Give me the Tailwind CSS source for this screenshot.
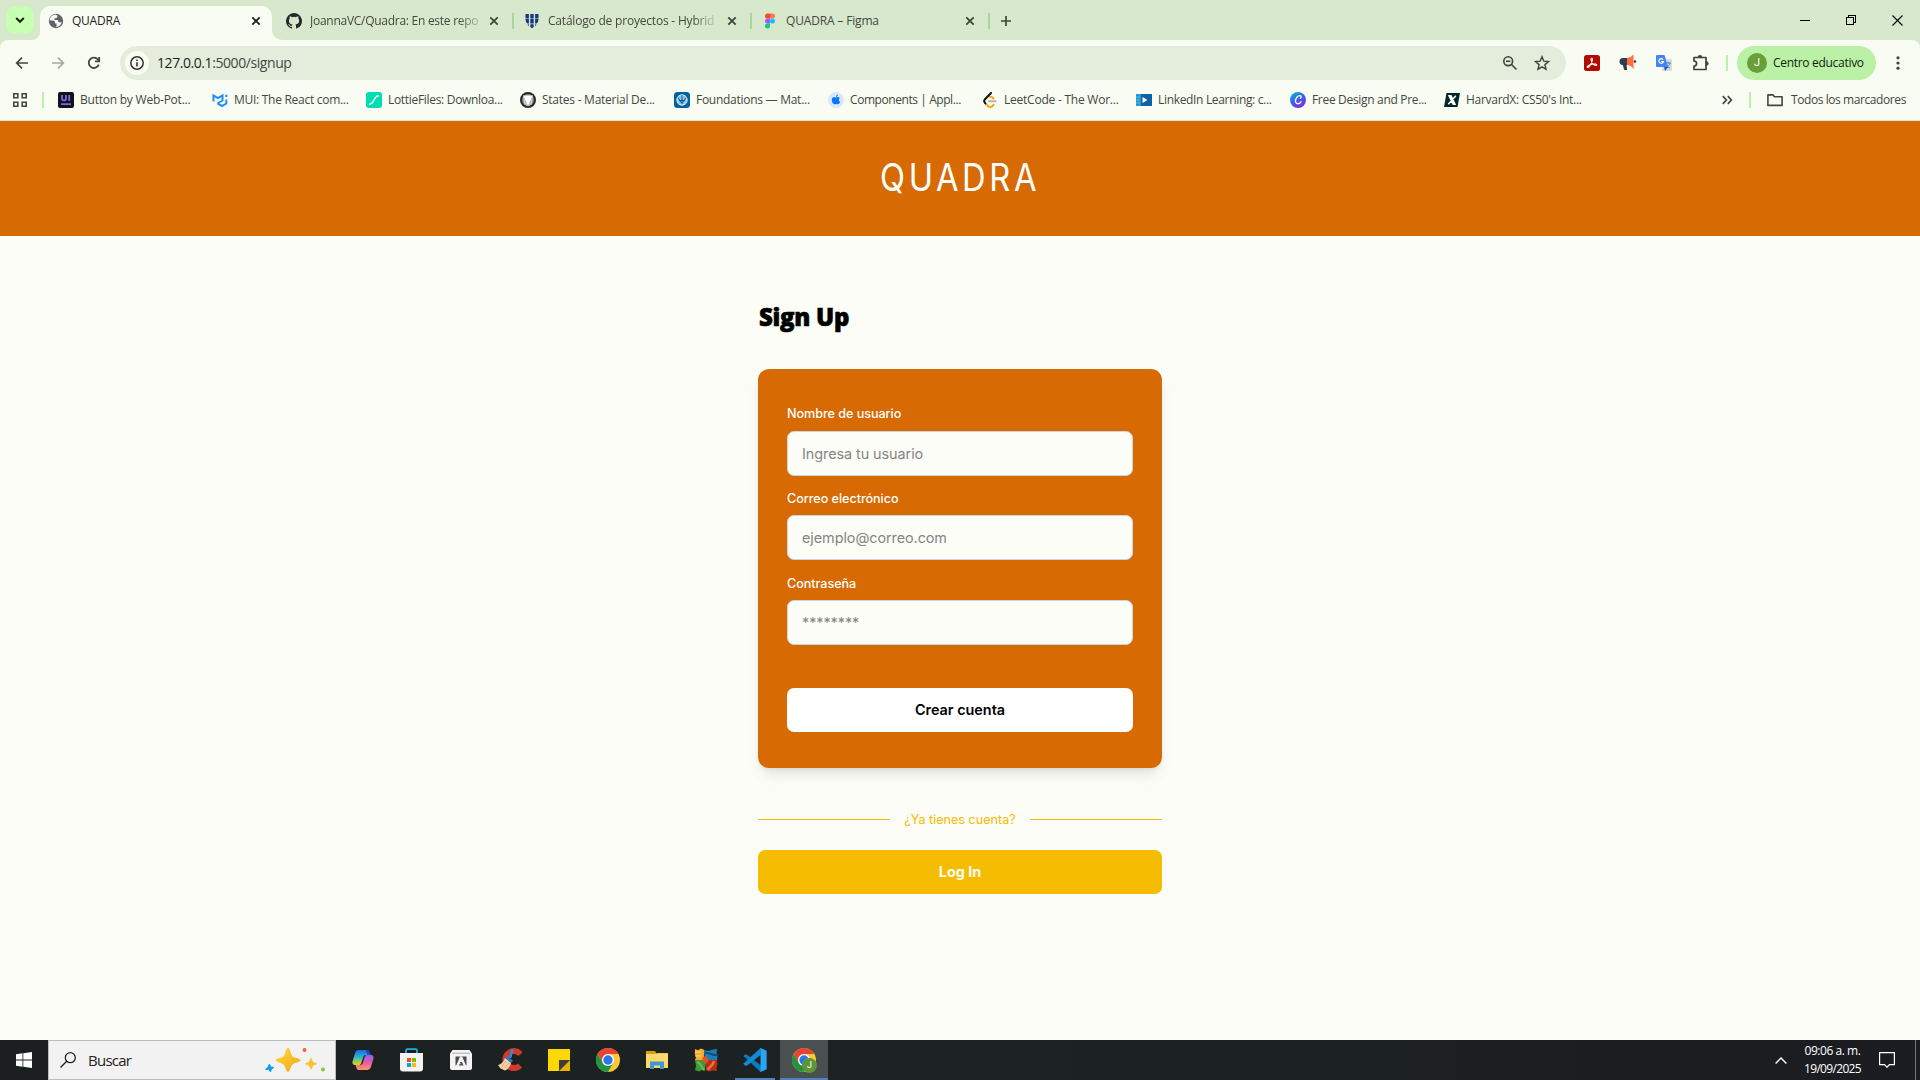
<!DOCTYPE html>
<html lang="es">
<head>
<meta charset="utf-8">
<title>QUADRA</title>
<script src="https://cdn.jsdelivr.net/npm/@tailwindcss/browser@4"></script>
</head>
<body class="w-[1920px] h-[1080px] overflow-hidden flex flex-col bg-[#fcfdf7] font-['Open_Sans','Noto_Sans',sans-serif] text-xs text-[#43483f]">

<!-- Tab strip -->
<div class="h-10 shrink-0 bg-[#d8e8cc] flex items-end">
  <div class="w-10 h-10 shrink-0 pl-1.5 pt-1.5 relative">
    <div class="size-7 rounded-[10px] bg-[#c7ffb3] flex items-center justify-center">
      <svg class="size-3" viewBox="0 0 12 12" fill="none" stroke="#1d1f1b" stroke-width="2"><path d="M2.2 4 6 7.8 9.8 4"/></svg>
    </div>
    <svg class="absolute right-0 bottom-0 size-2" viewBox="0 0 8 8"><path d="M8 0v8H0A8 8 0 0 0 8 0Z" fill="#f9fcf2"/></svg>
  </div>
  <div class="w-[232px] h-[34px] shrink-0 rounded-t-[10px] bg-[#f9fcf2] flex items-center relative pl-2 pb-[5px] text-[#1d1f1b]">
    <svg class="size-4" viewBox="0 0 16 16"><circle cx="8" cy="8" r="7.2" fill="#5f6368"/><path d="M7.3 1.5C4 2 1.800 4.500 1.700 7.500h3c1.500 0 2.300.8 2.300 2v1h1.500V13c0 .6-.4 1-1 1.100 3-.1 5.400-2 6.300-4.900h-2.500c-.8 0-1.200-.5-1.200-1.200V7H6.400V5.300h1.500c.8 0 1.200-.5 1.200-1.200V3.200h1.400" fill="#f9fcf2"/></svg>
    <span class="ml-2 w-44 tracking-[-0.23px]">QUADRA</span>
    <svg class="size-4" viewBox="0 0 16 16" stroke="#1d1f1b" stroke-width="1.800"><path d="m4.300 4.300 7.400 7.400m0-7.400-7.400 7.400"/></svg>
    <svg class="absolute left-full bottom-0 size-2.5" viewBox="0 0 10 10"><path d="M0 0v10h10A10 10 0 0 1 0 0Z" fill="#f9fcf2"/></svg>
  </div>
  <div class="w-[242px] h-[34px] shrink-0 flex items-center pl-3.5 pb-[5px]">
    <svg class="size-4" viewBox="0 0 16 16"><path fill="#24292f" d="M8 0a8 8 0 0 0-2.530 15.590c.4.070.55-.17.550-.38v-1.490c-2.230.48-2.690-.95-2.690-.95-.36-.92-.89-1.170-.89-1.170-.73-.5.050-.49.050-.49.800.06 1.230.83 1.230.83.720 1.220 1.870.87 2.330.66.070-.52.280-.87.510-1.070-1.780-.2-3.640-.89-3.640-3.950 0-.87.310-1.590.82-2.150-.08-.2-.36-1.020.08-2.120 0 0 .67-.21 2.200.82a7.600 7.600 0 0 1 4 0c1.530-1.040 2.200-.82 2.200-.82.440 1.100.16 1.920.08 2.120.510.56.82 1.270.82 2.150 0 3.070-1.870 3.750-3.650 3.950.290.25.540.73.540 1.480v2.200c0 .21.150.46.550.38A8 8 0 0 0 8 0Z"/></svg>
    <span class="ml-2 w-[168px] overflow-hidden whitespace-nowrap tracking-[-0.27px] [mask-image:linear-gradient(to_right,#000_88%,transparent_105%)]">JoannaVC/Quadra: En este repo</span>
    <svg class="ml-2 size-4" viewBox="0 0 16 16" stroke="#3f453b" stroke-width="1.800"><path d="m4.300 4.300 7.400 7.400m0-7.400-7.400 7.400"/></svg>
    <span class="ml-[10px] w-0.5 h-4 bg-[#a4d99a]"></span>
  </div>
  <div class="w-[238px] h-[34px] shrink-0 flex items-center pl-[10px] pb-[5px]">
    <svg class="size-4" viewBox="0 0 16 16" fill="#17377f"><path d="M1.500 1h3.400v4H1.500zM6.300 1h3.400v4H6.300zM11.100 1h3.400v4h-3.400zM1.500 5.500h3.400v5H3.500C2 9.500 1.500 8 1.500 5.500Zm4.800 0h3.400v5H6.300zm4.800 0h3.400c0 2.500-.5 4-2 5h-1.400zM3.600 11.200h1.300v2.200Zm2.700 0h3.400v2.700L8 15.300l-1.700-1.400zm4.800 0h1.300l-1.300 2.200z"/></svg>
    <span class="ml-2 w-[168px] overflow-hidden whitespace-nowrap tracking-[-0.2px] [mask-image:linear-gradient(to_right,#000_86%,transparent_102%)]">Catálogo de proyectos - Hybrid</span>
    <svg class="ml-2 size-4" viewBox="0 0 16 16" stroke="#3f453b" stroke-width="1.800"><path d="m4.300 4.300 7.400 7.400m0-7.400-7.400 7.400"/></svg>
    <span class="ml-[10px] w-0.5 h-4 bg-[#a4d99a]"></span>
  </div>
  <div class="w-[238px] h-[34px] shrink-0 flex items-center pl-[10px] pb-[5px]">
    <svg class="size-4" viewBox="0 0 16 16"><path d="M5.500.5H8v5H5.500a2.500 2.500 0 0 1 0-5Z" fill="#f24e1e"/><path d="M8 .5h2.500a2.500 2.500 0 0 1 0 5H8z" fill="#ff7262"/><path d="M5.500 5.500H8v5H5.500a2.500 2.500 0 0 1 0-5Z" fill="#a259ff"/><circle cx="10.500" cy="8" r="2.500" fill="#1abcfe"/><path d="M5.500 10.500H8V13a2.500 2.500 0 1 1-2.500-2.500Z" fill="#0acf83"/></svg>
    <span class="ml-2 w-[168px] whitespace-nowrap tracking-[-0.16px]">QUADRA – Figma</span>
    <svg class="ml-2 size-4" viewBox="0 0 16 16" stroke="#3f453b" stroke-width="1.800"><path d="m4.300 4.300 7.400 7.400m0-7.400-7.400 7.400"/></svg>
    <span class="ml-[10px] w-0.5 h-4 bg-[#a4d99a]"></span>
  </div>
  <div class="h-[34px] pl-2 pb-[5px] flex items-center">
    <svg class="size-4" viewBox="0 0 16 16" stroke="#3f453b" stroke-width="1.700"><path d="M8 3v10M3 8h10"/></svg>
  </div>
  <div class="ml-auto h-10 flex items-center text-black">
    <div class="w-[46px] flex justify-center"><span class="w-2.5 h-px bg-black"></span></div>
    <div class="w-[46px] flex justify-center"><svg class="size-[10px]" viewBox="0 0 10 10" fill="none" stroke="#000" shape-rendering="crispEdges"><path d="M.5 2.500h7v7h-7zM2.500 2.500v-2h7v7h-2"/></svg></div>
    <div class="w-[46px] flex justify-center"><svg class="size-[11px]" viewBox="0 0 11 11" stroke="#000" stroke-width="1.100"><path d="m.5.5 10 10m0-10-10 10"/></svg></div>
  </div>
</div>

<!-- Toolbar -->
<div class="h-[46px] shrink-0 bg-[#d8e8cc]">
<div class="h-full bg-[#f9fcf2] rounded-t-lg flex items-center">
  <svg class="ml-3.5 size-4" viewBox="0 0 16 16" fill="none" stroke="#3d4a39" stroke-width="1.700"><path d="M14 8H3m5-5.300L2.700 8 8 13.300"/></svg>
  <svg class="ml-5 size-4" viewBox="0 0 16 16" fill="none" stroke="#a5aa9f" stroke-width="1.700"><path d="M2 8h11M8 2.700 13.300 8 8 13.300"/></svg>
  <svg class="ml-5 size-4" viewBox="0 0 16 16" fill="none" stroke="#3d4a39" stroke-width="1.800"><path d="M12.800 9.600A5.200 5.200 0 1 1 12 4.500l1.300 1.500"/><path d="M13.200 2v4.300H9"/></svg>
  <div class="ml-[18px] w-[1446px] h-[34px] rounded-full bg-[#e4eddc] flex items-center pl-[5px]">
    <div class="size-6 rounded-full bg-[#f9fcf2] flex items-center justify-center">
      <svg class="size-[14px]" viewBox="0 0 14 14"><circle cx="7" cy="7" r="6.200" fill="none" stroke="#30342d" stroke-width="1.500"/><path d="M6.200 6.200h1.600v4.300H6.200zM6.200 3.500h1.600v1.600H6.200z" fill="#30342d"/></svg>
    </div>
    <span class="ml-2 text-sm tracking-[-0.43px] whitespace-nowrap"><span class="text-[#1d1f1b]">127.0.0.1</span>:5000/signup</span>
    <svg class="ml-auto size-4" viewBox="0 0 16 16" fill="none" stroke="#3f453b" stroke-width="1.600"><circle cx="6.200" cy="6.200" r="4.400"/><path d="m9.500 9.500 5 5M4 6.200h4.400"/></svg>
    <svg class="ml-4 mr-4 size-4" viewBox="0 0 16 16" fill="none" stroke="#3f453b" stroke-width="1.400"><path d="m8 1.700 1.800 4.400 4.700.4-3.600 3.100 1.100 4.600L8 11.800l-4 2.400 1.100-4.600-3.600-3.100 4.700-.4Z"/></svg>
  </div>
  <svg class="ml-[18px] size-4" viewBox="0 0 16 16"><rect width="16" height="16" rx="2.500" fill="#b30b00"/><path d="M7.700 3.200c1.200 0 .8 2.500-.4 5C6.200 10.600 4.500 13 3.500 12.500c-1.200-.8 1.800-2.800 4.600-3.300 2.700-.5 4.800-.1 4.700.8-.2 1.100-2.800.1-4.300-1.700C7 6.300 6.500 3.200 7.700 3.200Z" fill="none" stroke="#fff" stroke-width="1.100"/></svg>
  <svg class="ml-[19px] size-[18px]" viewBox="0 0 18 18"><path d="M4 4h4v7H4a3.500 3.500 0 0 1 0-7Z" fill="#2d3e50"/><path d="M3.500 10h4l.6 6H5.200Z" fill="#2d3e50"/><path d="M8 4c3-.2 4.500-1.500 6-3.200v13.400C12.500 12.500 11 11.200 8 11Z" fill="#ff6f3c"/><path d="M14 1h1.200v14H14z" fill="#f6b49c"/><circle cx="16" cy="7.500" r="1.300" fill="#2d3e50"/></svg>
  <svg class="ml-[19px] size-4" viewBox="0 0 16 16"><rect x="6" y="4" width="10" height="12" rx="1" fill="#dadce0"/><path d="M9 8h6m-3-1.200V8m2 0c-.5 2.500-2 4-4 5m0-3.500c1 2 2.500 3 4 3.500" stroke="#5f7f9f" fill="none"/><path d="M1 0h7.500l3.700 12H1a1 1 0 0 1-1-1V1a1 1 0 0 1 1-1Z" fill="#4285f4"/><path d="m9 16 3.200-4H8Z" fill="#2a56c6"/><path d="M7 4.600A2.300 2.300 0 1 0 7.400 6.500H5.200" fill="none" stroke="#fff" stroke-width="1.200"/></svg>
  <svg class="ml-5 size-[18px]" viewBox="0 0 18 18" fill="none" stroke="#37473a" stroke-width="1.700" stroke-linejoin="round"><path d="M2 3.500h12v12H2v-3.300a2.600 2.600 0 0 0 0-5.200Z"/><path d="M6 3.200a2 2 0 0 1 4 0ZM14.300 7.500a2 2 0 0 1 0 4Z" fill="#37473a" stroke-width=".6"/></svg>
  <span class="ml-4 w-0.5 h-4 bg-[#bdf0ab]"></span>
  <div class="ml-[9px] w-[139px] h-[34px] rounded-full bg-[#bbf1a6] flex items-center pl-2.5 text-[#0d2508]">
    <span class="size-5 rounded-full bg-[#689f38] text-white text-[11px] flex items-center justify-center font-['Roboto',sans-serif]">J</span>
    <span class="ml-1.5 tracking-[-0.3px] whitespace-nowrap">Centro educativo</span>
  </div>
  <svg class="ml-3.5 size-4" viewBox="0 0 16 16" fill="#3f453b"><circle cx="8" cy="2.800" r="1.600"/><circle cx="8" cy="8" r="1.600"/><circle cx="8" cy="13.200" r="1.600"/></svg>
</div>
</div>

<!-- Bookmarks bar -->
<div class="h-[35px] shrink-0 bg-[#f9fcf2] border-b border-[#dde5d2] flex items-center pb-[6px] whitespace-nowrap">
  <svg class="ml-3 size-4" viewBox="0 0 16 16" fill="none" stroke="#43483f" stroke-width="1.600"><path d="M1.800 1.800h4v4h-4zM10.200 1.800h4v4h-4zM1.800 10.200h4v4h-4zM10.200 10.200h4v4h-4z"/></svg>
  <span class="ml-3.5 mr-3.5 w-0.5 h-4 bg-[#bdf0ab]"></span>
  <div class="w-[154px] flex items-center gap-1.5">
    <svg class="size-4" viewBox="0 0 16 16"><rect width="16" height="16" rx="2" fill="#131218"/><path d="M4 3v3.500c0 2.600 4 2.600 4 0V3M11.200 3v6M3 12.200h10" fill="none" stroke="#7468e8" stroke-width="1.800"/></svg>
    <span class="tracking-[-0.23px]">Button by Web-Pot...</span>
  </div>
  <div class="w-[154px] flex items-center gap-1.5">
    <svg class="size-4" viewBox="0 0 16 16" fill="none" stroke="#1a8cff" stroke-width="2"><path d="M1.500 9.500V3.500L6 6.200l4.500-2.700v5L6.200 11v1L10 14l4.300-2.500V7.500M14.300 5V2.700"/></svg>
    <span class="tracking-[-0.28px]">MUI: The React com...</span>
  </div>
  <div class="w-[154px] flex items-center gap-1.5">
    <svg class="size-4" viewBox="0 0 16 16"><rect width="16" height="16" rx="3" fill="#00ddb3"/><path d="M3.500 12.200C8.500 12 7.500 4 12.500 3.800" fill="none" stroke="#fff" stroke-width="1.500" stroke-linecap="round"/></svg>
    <span class="tracking-[-0.31px]">LottieFiles: Downloa...</span>
  </div>
  <div class="w-[154px] flex items-center gap-1.5">
    <svg class="size-4" viewBox="0 0 16 16"><circle cx="8" cy="8" r="7" fill="#8b8b8b" stroke="#262626" stroke-width="2"/><path d="M3 3.500h10L8 14Z" fill="#fff"/><path d="M13 3.500 8 14 3 3.500 4 12l4 2.500 4-2.500Z" fill="#c4c4c4"/></svg>
    <span class="tracking-[-0.25px]">States - Material De...</span>
  </div>
  <div class="w-[154px] flex items-center gap-1.5">
    <svg class="size-4" viewBox="0 0 16 16"><rect width="16" height="16" rx="3.500" fill="#01639b"/><circle cx="8" cy="8" r="5.200" fill="#8fc2e6" stroke="#dcefff"/><path d="m4 5.500 4 6 4-6M8 3v8.500M5 8.500h6" fill="none" stroke="#01639b"/></svg>
    <span class="tracking-[-0.27px]">Foundations — Mat...</span>
  </div>
  <div class="w-[154px] flex items-center gap-1.5">
    <svg class="size-4" viewBox="0 0 16 16"><circle cx="8" cy="8" r="8" fill="#d9e9fb"/><path d="M8 5.500c.7 0 1.300-.6 2.200-.5.700 0 1.300.4 1.600.9-1.500 1-1.200 3.200.3 3.800-.4 1.200-1.200 2.600-2.200 2.600-.7 0-1-.4-1.800-.4s-1.200.4-1.900.4c-1.200 0-2.400-2.600-2.400-4.300 0-1.800 1-2.900 2.200-2.900.8 0 1.400.4 2 .4ZM8 5c-.1-1.200.9-2.300 1.900-2.400C10 3.800 9.200 4.900 8 5Z" fill="#0a77ff"/></svg>
    <span class="tracking-[-0.43px]">Components | Appl...</span>
  </div>
  <div class="w-[154px] flex items-center gap-1.5">
    <svg class="size-4" viewBox="0 0 16 16" fill="none" stroke-width="2" stroke-linecap="round"><path d="M7 9.200h6.500" stroke="#b3b3b3"/><path d="M11.500 6.500 9.700 4.900 7.800 4.700M3.500 11.500l2.700 2.700c1 1 3 1 4 0l1.300-1.400" stroke="#ffa116"/><path d="M9 1 3 7.200c-1 1.200-1 2.800.3 4.200" stroke="#111"/></svg>
    <span class="tracking-[-0.23px]">LeetCode - The Wor...</span>
  </div>
  <div class="w-[154px] flex items-center gap-1.5">
    <svg class="size-4" viewBox="0 0 16 16"><path d="M0 2h16v12H0z" fill="#2598cf"/><path d="M5 2h11v12H5z" fill="#0b62a8"/><path d="M0 5h4M0 8h4M0 11h4" stroke="#57b9e4"/><path d="M6.500 5v6l5-3Z" fill="#fff"/></svg>
    <span class="tracking-[-0.33px]">LinkedIn Learning: c...</span>
  </div>
  <div class="w-[154px] flex items-center gap-1.5">
    <svg class="size-4" viewBox="0 0 16 16"><defs><linearGradient id="cv" x1="0" y1="0" x2=".6" y2="1"><stop offset="0" stop-color="#00c4cc"/><stop offset=".5" stop-color="#3969e7"/><stop offset="1" stop-color="#7d2ae8"/></linearGradient></defs><circle cx="8" cy="8" r="8" fill="url(#cv)"/><path d="M10.500 6.200c1.200-1.300.6-2.700-.9-2.600-2.500.2-4.600 3.600-4 6.300.6 2.600 3.800 2.500 5.400-.1" fill="none" stroke="#fff" stroke-width="1.300" stroke-linecap="round"/></svg>
    <span class="tracking-[-0.32px]">Free Design and Pre...</span>
  </div>
  <div class="w-[154px] flex items-center gap-1.5">
    <svg class="size-4" viewBox="0 0 16 16"><path d="M2.500 1H16l-2.500 14H0Z" fill="#02262b"/><path d="M5 3.800h2l4 8.400H9.200ZM11.800 3.800 4.300 12.200" fill="#fff" stroke="#fff" stroke-width="1.500"/></svg>
    <span class="tracking-[-0.29px]">HarvardX: CS50's Int...</span>
  </div>
  <svg class="ml-[123px] size-3" viewBox="0 0 12 12" fill="none" stroke="#43483f" stroke-width="1.700"><path d="M1.800 2.200 5.400 6 1.800 9.800M6.800 2.200 10.400 6 6.800 9.800"/></svg>
  <span class="ml-4 w-0.5 h-4 bg-[#bdf0ab]"></span>
  <svg class="ml-4 size-4" viewBox="0 0 16 16" fill="none" stroke="#43483f" stroke-width="1.600" stroke-linejoin="round"><path d="M.9 2.900h5l1.600 1.800h7.600v8.700H.9Z"/></svg>
  <span class="ml-2 tracking-[-0.42px]">Todos los marcadores</span>
</div>

<!-- Page -->
<header class="h-[115px] shrink-0 bg-[#d76a03] flex items-center justify-center">
  <h1 class="font-['Inter',sans-serif] text-[38px] leading-none text-white tracking-[4.200px] scale-x-[0.86] -translate-y-0.5">QUADRA</h1>
</header>
<main class="flex-1 flex flex-col items-center font-['Inter',sans-serif]">
  <div class="w-[404px] pt-[63px]">
    <h2 class="font-['Open_Sans',sans-serif] font-extrabold text-2xl leading-9 tracking-[-0.3px] text-black pl-px [-webkit-text-stroke:0.6px_#000]">Sign Up</h2>
    <form class="mt-[34px] h-[399px] rounded-[11px] bg-[#d76a03] px-[29px] pt-9 shadow-[0_9px_14px_-3px_rgba(0,0,0,0.1),0_4px_6px_-4px_rgba(0,0,0,0.1)] text-white">
      <label class="block text-[12.600px] font-medium leading-[18px] h-[26px] tracking-[-0.040px]" for="u">Nombre de usuario</label>
      <input id="u" type="text" placeholder="Ingresa tu usuario" class="block w-full h-[45px] rounded-[7px] border border-[#cbd5e1] bg-[#fcfdf7] pl-[14px] pr-[15px] pb-px text-[14.400px] tracking-[-0.060px] placeholder:text-[#858585]">
      <label class="block mt-[14px] text-[12.600px] font-medium leading-[18px] h-[25px] tracking-[-0.040px]" for="c">Correo electrónico</label>
      <input id="c" type="email" placeholder="ejemplo@correo.com" class="block w-full h-[45px] rounded-[7px] border border-[#cbd5e1] bg-[#fcfdf7] pl-[14px] pr-[15px] text-[14.400px] tracking-[-0.060px] placeholder:text-[#858585]">
      <label class="block mt-[15px] text-[12.600px] font-medium leading-[18px] h-[25px] tracking-[-0.040px]" for="p">Contraseña</label>
      <input id="p" type="password" placeholder="********" class="block w-full h-[45px] rounded-[7px] border border-[#cbd5e1] bg-[#fcfdf7] pl-[14px] pr-[15px] text-[14.400px] tracking-[-0.060px] placeholder:text-[#858585]">
      <button type="button" class="block mt-[43px] w-full h-11 rounded-[7px] bg-white text-black text-[14.400px] font-semibold">Crear cuenta</button>
    </form>
    <div class="mt-[42px] h-[19px] flex items-center text-[12.600px] text-[#f5bc02]">
      <span class="flex-1 h-px bg-[#f5bc02]"></span>
      <span class="w-[140px] text-center pt-px">¿Ya tienes cuenta?</span>
      <span class="flex-1 h-px bg-[#f5bc02]"></span>
    </div>
    <button type="button" class="block mt-[21px] w-full h-11 rounded-[7px] bg-[#f5bc02] text-[#fffdf5] text-[14.400px] font-bold">Log In</button>
  </div>
</main>

<!-- Taskbar -->
<footer class="h-10 shrink-0 flex bg-linear-to-r from-[#1b1f20] via-[#1c2322] to-[#1b1c21]">
  <div class="w-12 flex items-center justify-center">
    <svg class="size-4" viewBox="0 0 16 16" fill="#fff"><path d="M0 2.200 6.500 1.300v6.300H0zM7.300 1.200 16 0v7.600H7.300zM0 8.400h6.500v6.300L0 13.800zM7.300 8.400H16V16l-8.700-1.200z"/></svg>
  </div>
  <div class="w-[288px] border border-[#bdbdbd] bg-[#f2f2f2] flex items-center pl-[11px] text-[#222]">
    <svg class="size-4" viewBox="0 0 16 16" fill="none" stroke="#222" stroke-width="1.300"><circle cx="10.300" cy="5.700" r="5"/><path d="M6.700 9.300.5 15.500"/></svg>
    <span class="ml-3 text-[15px] tracking-[-0.75px]">Buscar</span>
    <svg class="ml-auto mr-2.5 w-[60px] h-[26px]" viewBox="0 0 60 26"><defs><linearGradient id="st" x1="0" y1="0" x2="1" y2="1"><stop offset="0" stop-color="#ffd93b"/><stop offset="1" stop-color="#f2a71b"/></linearGradient></defs><path d="M23 1c1.500 0 2.200 7 4.500 8.800S35 11.800 35 13.200s-5 1.800-7.500 3.800S24.600 24.500 23 24.500s-2.200-5.500-4.500-7.500-7.500-2.300-7.500-3.800 5.200-1.400 7.500-3.400S21.500 1 23 1Z" fill="url(#st)" stroke="url(#st)"/><path d="M46 11c.7 0 1 3.500 2 4.300s3.500.8 3.500 1.500-2.500.7-3.500 1.600-1.300 3.800-2 3.800-1-2.900-2-3.800-3.500-.9-3.500-1.600 2.500-.7 3.500-1.500 1.300-4.300 2-4.300Z" fill="#f9c22e" stroke="#f9c22e" stroke-width=".6"/><path d="m4.500 17 1 2.800 3.300.7-2.500 1.700L5.500 25l-1.700-2.400-3.300-.4 2.300-1.800Z" fill="#0f9fe8" stroke="#0f9fe8"/><circle cx="39.500" cy="3" r="2" fill="#f2672c"/><circle cx="58" cy="22.500" r="2" fill="#86c440"/></svg>
  </div>
  <div class="ml-0.5 w-[49px] flex items-center justify-center">
    <svg class="size-[22px]" viewBox="0 0 22 22"><defs><linearGradient id="ca" x1="0" y1="0" x2="0" y2="1"><stop offset="0" stop-color="#1e67e6"/><stop offset=".45" stop-color="#24b5d4"/><stop offset=".75" stop-color="#8fd04a"/><stop offset="1" stop-color="#f5c72f"/></linearGradient><linearGradient id="cb" x1="0" y1="0" x2="0" y2="1"><stop offset="0" stop-color="#9460ee"/><stop offset=".5" stop-color="#e85aa7"/><stop offset="1" stop-color="#fb9a5e"/></linearGradient></defs><path d="M7 1h8c1.500 0 2.300 1 2.700 2.300L18.500 6H14c-1.500 0-2.300.8-2.700 2l-2 6c-.5 1.500-1.300 2-2.700 2H3C1 16 0 14.500.6 12.300l2.600-8.500C3.800 2 5 1 7 1Z" fill="url(#ca)"/><path d="M15 21H7c-1.500 0-2.300-1-2.700-2.300L3.500 16H8c1.500 0 2.300-.8 2.700-2l2-6c.5-1.500 1.300-2 2.700-2H19c2 0 3 1.500 2.400 3.700l-2.600 8.500C18.200 20 17 21 15 21Z" fill="url(#cb)"/><path d="M13.500 1H15c1.500 0 2.300 1 2.700 2.300L18.500 6h-3Z" fill="#164fb6"/></svg>
  </div>
  <div class="w-[49px] flex items-center justify-center">
    <svg class="w-[23px] h-6" viewBox="0 0 23 24"><path d="M6 6V2.500Q6 1.200 7.300 1.200h8.400Q17 1.200 17 2.500V6" fill="none" stroke="#22b0ea" stroke-width="1.700"/><path d="M0 5h23v15.500a3 3 0 0 1-3 3H3a3 3 0 0 1-3-3Z" fill="#f3f3f3"/><path d="M7 10h4v4H7z" fill="#f25022"/><path d="M12 10h4v4h-4z" fill="#7fba00"/><path d="M7 15h4v4H7z" fill="#00a4ef"/><path d="M12 15h4v4h-4z" fill="#ffb900"/></svg>
  </div>
  <div class="w-[49px] flex items-center justify-center">
    <svg class="size-[22px]" viewBox="0 0 22 22"><path d="M2.500 1h17L22 4.500V19a2 2 0 0 1-2 2H2a2 2 0 0 1-2-2V4.500Z" fill="#f4f4f4"/><path d="M2 4.200h18" stroke="#aaa" stroke-width="1"/><path d="M5.500 7.500h11v9h-11z" fill="#4a4a4a"/><path d="m6 17 4-9.500h2.200l4 9.500h-2.500L12 13h-2.200l1 2.200H9.300L8.500 17Z" fill="#f4f4f4"/></svg>
  </div>
  <div class="w-[49px] flex items-center justify-center">
    <svg class="size-6" viewBox="0 0 24 24"><path d="M22.500 6.200A8.500 8.500 0 1 0 22 17.500" fill="none" stroke="#d13a2c" stroke-width="6"/><path d="M14.500 1.500 12 10" stroke="#2f8fd8" stroke-width="2.500"/><path d="m8.500 8 6.500 4.500-2 2.500-6-5Z" fill="#2b78c0"/><path d="m7 10 6 5c-1 4-3.500 7-6.500 7.500L4 21l-1.500-.5L1 18.500 0 17c3-.5 5.500-3 7-7Z" fill="#f2cfa4"/><path d="m8 13-4 5M10.500 15 7 20" stroke="#d9a873" stroke-width=".8"/></svg>
  </div>
  <div class="w-[49px] flex items-center justify-center">
    <svg class="size-[22px]" viewBox="0 0 22 22"><path d="M0 0h22v11L11 22H0z" fill="#ffd800"/><path d="M22 11v11H11z" fill="#e8b400"/><path d="M11 11h11L11 22z" fill="#3c3c41"/></svg>
  </div>
  <div class="w-[49px] flex items-center justify-center">
    <svg class="size-6" viewBox="0 0 24 24"><circle cx="12" cy="12" r="12" fill="#fcc934"/><path d="M12 12 6.800 15 1.600 6A12 12 0 0 1 22.400 6H12Z" fill="#ea4335"/><path d="M1.600 6 6.800 15c1.500 2.500 6 3.500 10.400 0L12 24A12 12 0 0 1 1.600 6Z" fill="#229342"/><circle cx="12" cy="12" r="6" fill="#fff"/><circle cx="12" cy="12" r="4.700" fill="#2878ea"/></svg>
  </div>
  <div class="w-[49px] flex items-center justify-center">
    <svg class="size-[22px]" viewBox="0 0 22 22"><path d="M0 3.500V2.200h8l2 2h12V19H0Z" fill="#f0b429"/><path d="M0 5h10l1.500-.8H22V19H0Z" fill="#ffd86b"/><path d="M0 2h9l1 1.500L9 5H0Z" fill="#dd9f08"/><path d="M4 20v-7.500h14V20h-4v-3.500H8V20Z" fill="#3f97d8"/></svg>
  </div>
  <div class="w-[49px] flex items-center justify-center">
    <svg class="size-6" viewBox="0 0 24 24"><path d="m1 1 3 1.200L7 .5l3 1.200V12H1l1.200-3L.8 6Z" fill="#f3ad2c"/><path d="M1 4h6M1 8h6" stroke="#f9dd8b"/><path d="M10 2c5 2 9-1 13-1l-.5 4 1 3-.5 4H11Z" fill="#1c7fb5"/><path d="M11 5c4-1 8 3 12.500 2" stroke="#114d78" stroke-width="2" fill="none"/><path d="M1 12h11l-1 11-3-1-3 1.500L1 22l1-4Z" fill="#3b9b3a"/><path d="M3 14c4 1 4 5 7 8" stroke="#78b94d" stroke-width="2" fill="none"/><path d="M12 12h11l.5 4-1 4 .5 3-4-.5-3 1-4-1Z" fill="#b72d1c"/><path d="M14 22c1-4 5-3 6-9" stroke="#ee7530" stroke-width="2.500" fill="none"/><path d="m9 9 3-1 3 4-3 4-4-3Z" fill="#dc5328"/></svg>
  </div>
  <div class="w-[49px] flex items-center justify-center relative">
    <svg class="size-6" viewBox="0 0 24 24"><path d="m17.500 0 6 2.800v18.400l-6 2.800L2 9.500 .3 8.200l2-2L4.500 7 18 17.500v-11L4.500 17l-2.200.8-2-2L2 14.500Z" fill="#0b78c0"/><path d="m17.500 0 6 2.800v18.400l-6 2.800z" fill="#2aa5f0"/><path d="m.3 15.800 2 2 2.200-.8L18 6.500V0Z" fill="#1489d4"/></svg>
    <span class="absolute left-[5px] bottom-0 w-10 h-0.5 bg-[#5680bd]"></span>
  </div>
  <div class="ml-px w-12 flex items-center justify-center bg-[#49504f] relative">
    <svg class="size-6" viewBox="0 0 24 24"><circle cx="12" cy="12" r="12" fill="#fcc934"/><path d="M12 12 6.800 15 1.600 6A12 12 0 0 1 22.400 6H12Z" fill="#ea4335"/><path d="M1.600 6 6.800 15c1.500 2.500 6 3.500 10.400 0L12 24A12 12 0 0 1 1.600 6Z" fill="#229342"/><circle cx="12" cy="12" r="6" fill="#fff"/><circle cx="12" cy="12" r="4.700" fill="#2878ea"/></svg>
    <span class="absolute left-[22px] top-[18px] size-[15px] rounded-full bg-[#5e9636] text-white text-[9px] leading-none flex items-center justify-center font-['Roboto',sans-serif]">J</span>
    <span class="absolute inset-x-0 bottom-0 h-0.5 bg-[#5680bd]"></span>
  </div>
  <div class="ml-auto flex items-center text-white">
    <svg class="w-3 h-[7px]" viewBox="0 0 12 7" fill="none" stroke="#fff" stroke-width="1.400"><path d="m.6 6.400 5.400-5.400 5.400 5.400"/></svg>
    <div class="ml-4 w-[59px] text-center leading-[18px] whitespace-nowrap">
      <div class="tracking-[-0.45px]">09:06 a. m.</div>
      <div class="tracking-[-0.67px]">19/09/2025</div>
    </div>
    <svg class="ml-[17px] size-4" viewBox="0 0 16 16" fill="none" stroke="#fff" stroke-width="1.200"><path d="M.6.600h14.800v12H10.500L8 15.200 5.500 12.600H.6Z"/></svg>
    <span class="ml-5 mr-1 w-px h-10 bg-[#76787c]"></span>
  </div>
</footer>
</body>
</html>
